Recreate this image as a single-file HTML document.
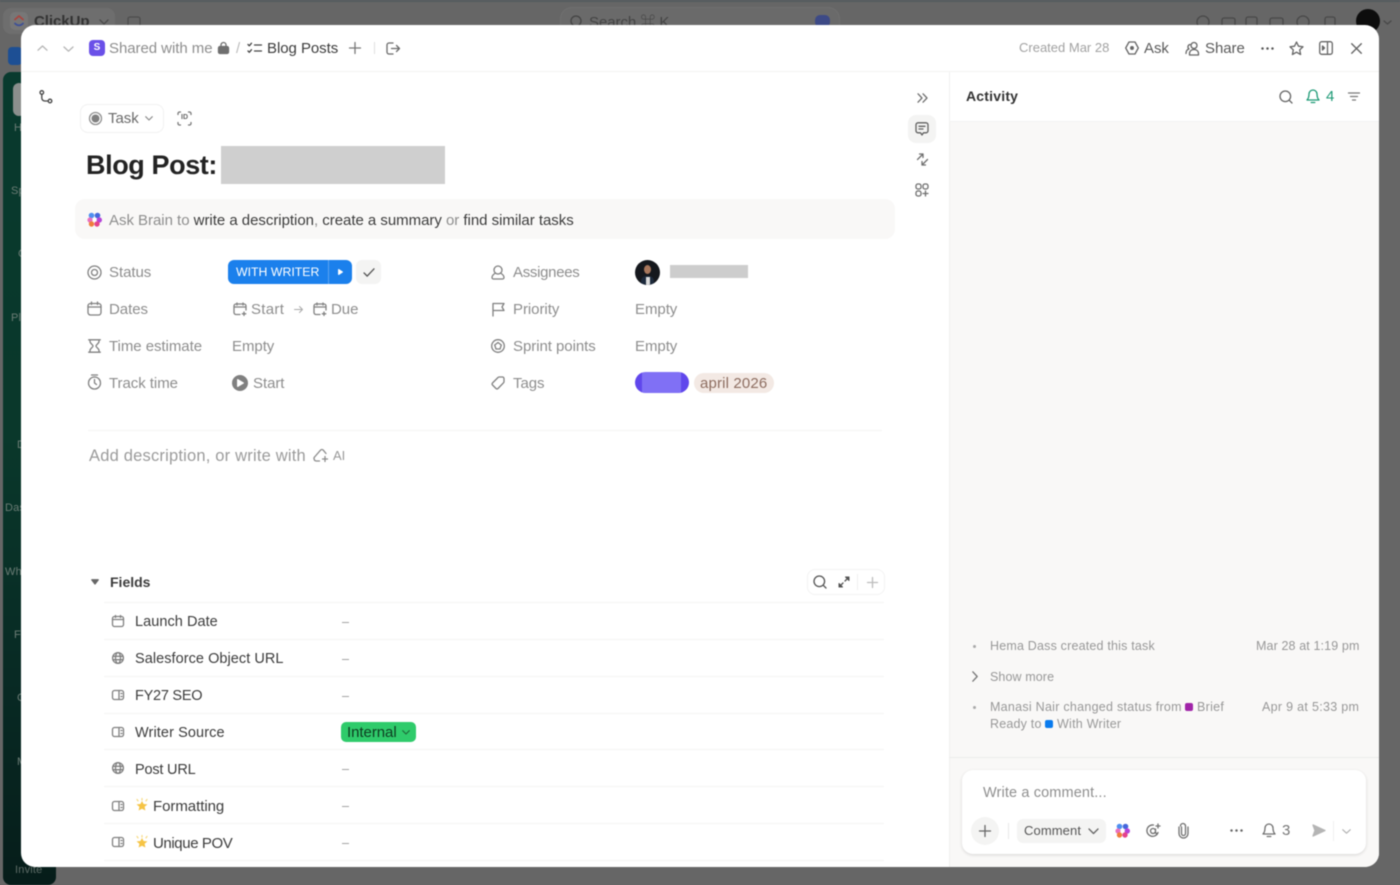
<!DOCTYPE html>
<html lang="en"><head><meta charset="utf-8"><title>Blog Post</title>
<style>
html,body{margin:0;padding:0;width:1400px;height:885px;overflow:hidden;background:#666}
*{box-sizing:border-box}
#root{position:relative;width:1400px;height:885px;overflow:hidden;background:#666;font-family:"Liberation Sans","Noto Sans CJK JP",sans-serif;filter:blur(.45px)}
.t{position:absolute;white-space:nowrap;font-size:15px;line-height:18px;letter-spacing:-.05px;color:#8e8e8e;margin-top:1px}
.n{margin-top:0}
.d{color:#3c3c3c}
.f{font-size:14.5px;letter-spacing:.05px}
.a{font-size:12.5px;letter-spacing:.19px;color:#989898;margin-top:0}
.s{font-size:11px;letter-spacing:.2px;color:#6b7c75;margin-top:0}
.b{position:absolute;background:#fff}
svg{position:absolute;overflow:visible;fill:none;stroke:#808080;stroke-width:1.3;stroke-linecap:round;stroke-linejoin:round}
.k{stroke:#454545}
.line{position:absolute;height:1px;background:#f4f4f3}
.dash{position:absolute;left:342px;width:7px;height:1px;background:#a4a4a4}
</style></head><body><div id="root">

<!-- dimmed background -->
<div class="b" style="left:0;top:0;width:1400px;height:2px;background:#555b5e"></div>
<div class="b" style="left:3px;top:8px;width:112px;height:26px;border-radius:8px;background:#6e6e6e"></div>
<div class="b" style="left:10px;top:12px;width:18px;height:18px;border-radius:5px;background:#777"></div>
<svg style="left:14px;top:15px" width="10" height="12" viewBox="0 0 10 12"><path d="M1 4.500L5 1l4 3.500" stroke="#a8453f" stroke-width="1.800"/><path d="M1 8.500C3.500 11 6.500 11 9 8.500" stroke="#3e4f96" stroke-width="1.800"/></svg>
<div class="t n" style="left:34px;top:13px;font-size:15px;font-weight:bold;color:#333">ClickUp</div>
<svg style="left:99px;top:19px" width="10" height="6" viewBox="0 0 10 6"><path d="M1 1l4 4 4-4" stroke="#4a4a4a"/></svg>
<svg style="left:127px;top:15px" width="14" height="14" viewBox="0 0 14 14"><rect x="1" y="2" width="12" height="11" rx="2" stroke="#4c4c4c"/></svg>
<div class="b" style="left:560px;top:7px;width:280px;height:30px;border-radius:12px;background:#6a6a6a;border:1px solid #707070"></div>
<div class="t n" style="left:589px;top:14px;font-size:15px;color:#444">Search ⌘ K</div>
<svg style="left:570px;top:15px" width="13" height="13" viewBox="0 0 13 13"><circle cx="6" cy="6" r="5" stroke="#444"/></svg>
<div class="b" style="left:815px;top:15px;width:15px;height:12px;border-radius:5px;background:#3d4a86"></div>
<svg style="left:1195px;top:15px" width="150" height="12" viewBox="0 0 150 12"><g stroke="#484848"><circle cx="8" cy="7" r="6"/><rect x="27" y="3" width="13" height="9" rx="2"/><rect x="51" y="2" width="11" height="10" rx="2"/><rect x="75" y="3" width="13" height="9" rx="2"/><circle cx="108" cy="7" r="6"/><rect x="130" y="2" width="10" height="10" rx="2"/></g></svg>
<div class="b" style="left:1356px;top:9px;width:24px;height:24px;border-radius:50%;background:#0d0d0d"></div>
<svg style="left:1383px;top:20px" width="9" height="5" viewBox="0 0 9 5"><path d="M1 1l3.500 3L8 1" stroke="#484848"/></svg>
<div class="b" style="left:8px;top:47px;width:14px;height:18px;border-radius:4px;background:#1d4f94"></div>
<div class="b" style="left:3px;top:72px;width:53px;height:813px;border-radius:8px;background:linear-gradient(#093a2e,#0a382b 45%,#082a24 75%,#061d1a)"></div>
<div class="b" style="left:13px;top:83px;width:12px;height:33px;border-radius:6px;background:#8b8f8d"></div>
<div class="t s" style="left:14px;top:119px">H</div>
<div class="t s" style="left:11px;top:182px">Sp</div>
<div class="t s" style="left:18px;top:245px">C</div>
<div class="t s" style="left:11px;top:309px">Pl</div>
<div class="t s" style="left:17px;top:436px">D</div>
<div class="t s" style="left:5px;top:499px">Das</div>
<div class="t s" style="left:5px;top:563px">Wh</div>
<div class="t s" style="left:14px;top:626px">F</div>
<div class="t s" style="left:17px;top:689px">C</div>
<div class="t s" style="left:17px;top:753px">M</div>
<div class="t s" style="left:15px;top:861px;color:#5d6b66">Invite</div>

<!-- modal -->
<div class="b" style="left:21px;top:25px;width:1358px;height:842px;border-radius:14px;overflow:hidden">
  <div style="position:absolute;left:928px;top:96px;width:430px;height:746px;background:#f9f8f7"></div>
  <div style="position:absolute;left:928px;top:46px;width:1px;height:796px;background:#f0f0ef"></div>
  <div style="position:absolute;left:0;top:46px;width:1358px;height:1px;background:#f3f3f2"></div>
  <div style="position:absolute;left:928px;top:96px;width:430px;height:1px;background:#f3f3f2"></div>
  <div style="position:absolute;left:928px;top:732px;width:430px;height:1px;background:#ececeb"></div>
</div>

<!-- header left -->
<svg style="left:37px;top:45px" width="11" height="6" viewBox="0 0 11 6"><path d="M1 5.200L5.500 1 10 5.200" stroke="#b4b4b4"/></svg>
<svg style="left:63px;top:46px" width="11" height="6" viewBox="0 0 11 6"><path d="M1 1l4.500 4.200L10 1" stroke="#b4b4b4"/></svg>
<div class="b" style="left:89px;top:40px;width:16px;height:16px;border-radius:4px;background:#6a50e8;color:#fff;font-size:10px;font-weight:bold;line-height:16px;text-align:center">S</div>
<div class="t" style="left:109px;top:39px">Shared with me</div>
<svg style="left:218px;top:42px" width="11" height="12" viewBox="0 0 11 12"><rect x=".5" y="4.500" width="10" height="7" rx="1.500" fill="#6f6f6f" stroke="#6f6f6f"/><path d="M3 4.500V3a2.500 2.500 0 015 0v1.500" stroke="#6f6f6f"/></svg>
<div class="t" style="left:236px;top:39px;color:#bbb">/</div>
<svg style="left:247px;top:42px" width="15" height="12" viewBox="0 0 15 12"><path d="M1 2.500l1.300 1.300L4.500 1.200M1 9l1.300 1.300 2.200-2.600M7.500 3h7M7.500 9h7" class="k"/></svg>
<div class="t d" style="left:267px;top:39px;font-weight:500">Blog Posts</div>
<svg style="left:349px;top:42px" width="12" height="12" viewBox="0 0 12 12"><path d="M6 .5v11M.5 6h11" stroke="#777"/></svg>
<div class="line" style="left:374px;top:42px;width:1px;height:12px;background:#e0e0e0"></div>
<svg style="left:386px;top:42px" width="14" height="13" viewBox="0 0 14 13"><path d="M7 1H3a2 2 0 00-2 2v7a2 2 0 002 2h4M5.500 6.500h8M10.500 3.500l3 3-3 3" stroke="#6a6a6a"/></svg>

<!-- header right -->
<div class="t" style="left:1019px;top:38px;font-size:13px;letter-spacing:0;color:#a2a2a2">Created Mar 28</div>
<svg style="left:1125px;top:41px" width="14" height="14" viewBox="0 0 14 14"><path d="M4 1h6l3.300 6L10 13H4L.7 7z" stroke="#666"/><circle cx="7" cy="7" r="1.300" fill="#666" stroke="#666"/></svg>
<div class="t" style="left:1144px;top:39px;color:#5a5a5a">Ask</div>
<svg style="left:1185px;top:41px" width="15" height="15" viewBox="0 0 15 15"><circle cx="9" cy="4.500" r="3" stroke="#666"/><path d="M4.500 14v-1.500c0-2.500 2-4 4.500-4s4.500 1.500 4.500 4V14zM5 3.500a2.500 2.500 0 00-1 4.500C2 8.500 1 10 1 12.500" stroke="#666"/></svg>
<div class="t" style="left:1205px;top:39px;color:#5a5a5a">Share</div>
<svg style="left:1261px;top:47px" width="13" height="3" viewBox="0 0 13 3"><circle cx="1.500" cy="1.500" r=".6" fill="#555" stroke="#555"/><circle cx="6.500" cy="1.500" r=".6" fill="#555" stroke="#555"/><circle cx="11.500" cy="1.500" r=".6" fill="#555" stroke="#555"/></svg>
<svg style="left:1289px;top:41px" width="15" height="14" viewBox="0 0 15 14"><path d="M7.500 1l2 4.200 4.500.6-3.300 3.100.9 4.600-4.100-2.300-4.100 2.300.9-4.600L1 5.800l4.500-.6z" stroke="#666"/></svg>
<svg style="left:1319px;top:41px" width="14" height="14" viewBox="0 0 14 14"><rect x=".7" y=".7" width="12.600" height="12.600" rx="2" stroke="#666"/><path d="M8.500 1v12" stroke="#666"/><path d="M3.500 5l2 2-2 2z" fill="#666" stroke="#666"/></svg>
<svg style="left:1351px;top:43px" width="11" height="11" viewBox="0 0 11 11"><path d="M.7.700l9.600 9.600M10.300.700L.7 10.300" stroke="#666" stroke-width="1.400"/></svg>

<!-- left rail -->
<svg style="left:39px;top:90px" width="14" height="14" viewBox="0 0 14 14"><circle cx="2.800" cy="2.500" r="1.800" class="k"/><circle cx="11" cy="11" r="1.800" class="k"/><path d="M2.800 4.500V8a3 3 0 003 3h3.300" class="k"/></svg>

<!-- task chip -->
<div class="b" style="left:80px;top:104px;width:84px;height:29px;border:1px solid #f1f1f1;border-radius:8px"></div>
<svg style="left:88px;top:111px" width="15" height="15" viewBox="0 0 15 15"><circle cx="7.500" cy="7.500" r="6" stroke="#909090"/><circle cx="7.500" cy="7.500" r="4" fill="#808080" stroke="none"/></svg>
<div class="t" style="left:108px;top:109px;color:#6a6a6a">Task</div>
<svg style="left:145px;top:116px" width="8" height="5" viewBox="0 0 8 5"><path d="M.7.700L4 4 7.300.7" stroke="#888" stroke-width="1.100"/></svg>
<svg style="left:177px;top:111px" width="15" height="15" viewBox="0 0 15 15"><path d="M1 3.500V2.500A1.500 1.500 0 012.500 1H3.500M11.500 1h1A1.500 1.500 0 0114 2.500V3.500M14 11.500v1a1.500 1.500 0 01-1.500 1.500H11.500M3.500 14H2.500A1.500 1.500 0 011 12.500V11.500" stroke="#777"/></svg>
<div class="t n" style="left:181px;top:112px;font-size:7px;line-height:12px;letter-spacing:0;font-weight:bold;color:#666">ID</div>

<!-- title -->
<div class="t n" style="left:86px;top:147px;font-size:27px;line-height:36px;font-weight:bold;color:#232323;letter-spacing:-.4px">Blog Post:</div>
<div class="b" style="left:221px;top:146px;width:224px;height:38px;background:#cfcfcf"></div>

<!-- Ask Brain -->
<div class="b" style="left:75px;top:199px;width:820px;height:40px;border-radius:10px;background:#f9f8f7"></div>
<svg style="left:87px;top:212px;stroke:none" width="15" height="15" viewBox="0 0 15 15"><circle cx="4.500" cy="3.500" r="2.800" fill="#4f8ff0"/><circle cx="10.500" cy="3.500" r="2.800" fill="#4467dc"/><circle cx="12.300" cy="8" r="2.700" fill="#b443d9"/><circle cx="3" cy="8" r="2.600" fill="#e870c0"/><circle cx="4.500" cy="12" r="2.700" fill="#ef7d3c"/><circle cx="10" cy="12" r="2.700" fill="#e5418b"/><circle cx="7.500" cy="7.500" r="1.800" fill="#fff"/></svg>
<div class="t" style="left:109px;top:211px;letter-spacing:-.03px">Ask Brain to <span class="d">write a description</span>, <span class="d">create a summary</span> or <span class="d">find similar tasks</span></div>

<!-- properties left -->
<svg style="left:87px;top:265px" width="15" height="15" viewBox="0 0 15 15"><circle cx="7.500" cy="7.500" r="6.500"/><circle cx="7.500" cy="7.500" r="3"/></svg>
<div class="t" style="left:109px;top:263px">Status</div>
<div class="b" style="left:228px;top:260px;width:124px;height:24px;border-radius:6px;background:#1b80ec"></div>
<div class="t n" style="left:236px;top:263px;font-size:12.300px;color:#fff;letter-spacing:0">WITH WRITER</div>
<div class="line" style="left:328px;top:260px;width:1px;height:24px;background:#5aa3f2"></div>
<svg style="left:338px;top:269px;stroke:#fff;fill:#fff" width="5" height="6" viewBox="0 0 5 6"><path d="M.7.700L4.300 3 .7 5.300z"/></svg>
<div class="b" style="left:356px;top:260px;width:25px;height:24px;border-radius:6px;background:#f4f4f3"></div>
<svg style="left:363px;top:268px" width="12" height="9" viewBox="0 0 13 10"><path d="M1 5.500L4.500 9 12 1" stroke="#555" stroke-width="1.500"/></svg>

<svg style="left:87px;top:301px" width="15" height="15" viewBox="0 0 15 15"><rect x="1" y="2.500" width="13" height="11.500" rx="2.500"/><path d="M1 6h13M4.500 1v2.500M10.500 1v2.500"/></svg>
<div class="t" style="left:109px;top:300px">Dates</div>
<svg style="left:233px;top:302px" width="14" height="14" viewBox="0 0 14 14"><path d="M7 12.500H3a2 2 0 01-2-2V4a2 2 0 012-2h8a2 2 0 012 2v4M1 5h12M4 1v2M10 1v2M11 10v3.500M9.300 11.800h3.500"/></svg>
<div class="t" style="left:251px;top:300px;letter-spacing:.3px">Start</div>
<svg style="left:294px;top:305px" width="9" height="9" viewBox="0 0 9 9"><path d="M.5 4.500h8M5.500 1.500l3 3-3 3" stroke="#aaa" stroke-width="1"/></svg>
<svg style="left:313px;top:302px" width="14" height="14" viewBox="0 0 14 14"><path d="M7 12.500H3a2 2 0 01-2-2V4a2 2 0 012-2h8a2 2 0 012 2v4M1 5h12M4 1v2M10 1v2M11 10v3.500M9.300 11.800h3.500"/></svg>
<div class="t" style="left:331px;top:300px">Due</div>

<svg style="left:88px;top:339px" width="13" height="14" viewBox="0 0 13 14"><path d="M.7.800h11.600M.7 13.200h11.600M2 1v1.500c0 2 3 3 3 4.500s-3 2.500-3 4.500V13M11 1v1.500c0 2-3 3-3 4.500s3 2.500 3 4.500V13"/></svg>
<div class="t" style="left:109px;top:337px">Time estimate</div>
<div class="t" style="left:232px;top:337px">Empty</div>

<svg style="left:87px;top:374px" width="15" height="16" viewBox="0 0 15 16"><circle cx="7.500" cy="9" r="6"/><path d="M7.500 5.500V9l2 1.500M4.500 1h6"/></svg>
<div class="t" style="left:109px;top:374px">Track time</div>
<div class="b" style="left:232px;top:375px;width:16px;height:16px;border-radius:50%;background:#808080"></div>
<svg style="left:237px;top:379px;stroke:#fff;fill:#fff" width="7" height="8" viewBox="0 0 7 8"><path d="M.7.700L6.300 4 .7 7.300z"/></svg>
<div class="t" style="left:253px;top:374px">Start</div>

<!-- properties right -->
<svg style="left:491px;top:265px" width="14" height="15" viewBox="0 0 14 15"><circle cx="7" cy="5" r="4"/><path d="M4.500 8C2 9.500 1 11 1 12.500A1.500 1.500 0 002.500 14h9a1.500 1.500 0 001.500-1.500c0-1.500-1-3-3.500-4.500"/></svg>
<div class="t" style="left:513px;top:263px;letter-spacing:-.3px">Assignees</div>
<div class="b" style="left:635px;top:260px;width:25px;height:25px;border-radius:50%;background:#15181d;overflow:hidden"><div style="position:absolute;left:9px;top:5px;width:7px;height:9px;border-radius:50%;background:#a8775c"></div><div style="position:absolute;left:6px;top:16px;width:13px;height:10px;border-radius:5px 5px 0 0;background:#1d2a3c"></div><div style="position:absolute;left:11px;top:17px;width:4px;height:8px;background:#ddd"></div></div>
<div class="b" style="left:670px;top:265px;width:78px;height:13px;background:#cdcdcd"></div>

<svg style="left:492px;top:302px" width="13" height="15" viewBox="0 0 13 15"><path d="M1 14V1.500h11L10 5l2 3.500H1"/></svg>
<div class="t" style="left:513px;top:300px">Priority</div>
<div class="t" style="left:635px;top:300px">Empty</div>

<svg style="left:491px;top:339px" width="14" height="14" viewBox="0 0 14 14"><circle cx="7" cy="7" r="6.300"/><path d="M7 3.500L10.300 6 9 10H5L3.700 6z"/></svg>
<div class="t" style="left:513px;top:337px">Sprint points</div>
<div class="t" style="left:635px;top:337px">Empty</div>

<svg style="left:491px;top:376px" width="14" height="14" viewBox="0 0 14 14"><path d="M13 2.500v3.300a1.500 1.500 0 01-.5 1L7 12.500a1.500 1.500 0 01-2 0L1.500 9a1.500 1.500 0 010-2L7 1.500a1.500 1.500 0 011-.5h3.500A1.500 1.500 0 0113 2.500z"/></svg>
<div class="t" style="left:513px;top:374px">Tags</div>
<div class="b" style="left:635px;top:372px;width:54px;height:21px;border-radius:10.500px;background:linear-gradient(90deg,#6047ec 0 7px,#8070f5 7px 46px,#6047ec 46px)"></div>
<div class="b" style="left:694px;top:373px;width:80px;height:20px;border-radius:10px;background:#f3e9e4"></div>
<div class="t" style="left:700px;top:374px;color:#8d6d60;letter-spacing:.15px">april 2026</div>

<div class="line" style="left:88px;top:430px;width:794px"></div>
<div class="t" style="left:89px;top:445px;font-size:16.500px;line-height:20px;color:#9b9b9b;letter-spacing:.2px">Add description, or write with</div>
<svg style="left:313px;top:448px" width="15" height="15" viewBox="0 0 15 15"><path d="M6.500 13H3.500A2.500 2.500 0 012 8.500L7.500 2.200a1.800 1.800 0 012.800 0L13 5.500M12 8.500v5M9.500 11h5" stroke="#8c8c8c"/></svg>
<div class="t n" style="left:333px;top:447px;font-size:13px;color:#999">AI</div>

<!-- Fields -->
<svg style="left:91px;top:579px;stroke:#666;fill:#666" width="8" height="6" viewBox="0 0 8 6"><path d="M.8.800h6.400L4 5z"/></svg>
<div class="t d n" style="left:110px;top:573px;font-weight:bold;font-size:14px;letter-spacing:0">Fields</div>
<div class="b" style="left:807px;top:569px;width:78px;height:26px;border:1px solid #f3f3f3;border-radius:8px"></div>
<svg style="left:813px;top:575px" width="14" height="14" viewBox="0 0 14 14"><circle cx="6.300" cy="6.300" r="5.300" stroke="#555"/><path d="M10.300 10.300L13 13" stroke="#555"/></svg>
<svg style="left:838px;top:576px" width="12" height="12" viewBox="0 0 12 12"><path d="M7.500 1h3.500v3.500L7.500 1zM4.500 11H1V7.500L4.500 11z" fill="#555" stroke="#555" stroke-width="1"/><path d="M9 3L7 5M3 9l2-2" stroke="#555"/></svg>
<div class="line" style="left:857px;top:574px;width:1px;height:16px;background:#f0f0f0"></div>
<svg style="left:867px;top:577px" width="11" height="11" viewBox="0 0 11 11"><path d="M5.500.5v10M.5 5.500h10" stroke="#bcbcbc"/></svg>

<div class="line" style="left:104px;top:602px;width:780px"></div>
<div class="line" style="left:104px;top:639px;width:780px"></div>
<div class="line" style="left:104px;top:676px;width:780px"></div>
<div class="line" style="left:104px;top:713px;width:780px"></div>
<div class="line" style="left:104px;top:749px;width:780px"></div>
<div class="line" style="left:104px;top:786px;width:780px"></div>
<div class="line" style="left:104px;top:823px;width:780px"></div>
<div class="line" style="left:104px;top:860px;width:780px"></div>

<svg style="left:112px;top:615px" width="12" height="12" viewBox="0 0 12 12"><rect x=".5" y="1.500" width="11" height="10" rx="2"/><path d="M.5 4.500h11M3.500 .5v2M8.500 .5v2"/></svg>
<div class="t d f" style="left:135px;top:612px">Launch Date</div>
<div class="dash" style="top:622px"></div>
<svg style="left:112px;top:652px" width="12" height="12" viewBox="0 0 12 12"><circle cx="6" cy="6" r="5.400"/><ellipse cx="6" cy="6" rx="2.500" ry="5.400"/><path d="M1 4.300h10M1 7.700h10"/></svg>
<div class="t d f" style="left:135px;top:649px">Salesforce Object URL</div>
<div class="dash" style="top:659px"></div>
<svg style="left:112px;top:690px" width="12" height="10" viewBox="0 0 12 10"><rect x=".5" y=".5" width="11" height="9" rx="2"/><path d="M7 .5v9M9 3.500h1M9 6.500h1"/></svg>
<div class="t d f" style="left:135px;top:686px;letter-spacing:-.25px">FY27 SEO</div>
<div class="dash" style="top:696px"></div>
<svg style="left:112px;top:727px" width="12" height="10" viewBox="0 0 12 10"><rect x=".5" y=".5" width="11" height="9" rx="2"/><path d="M7 .5v9M9 3.500h1M9 6.500h1"/></svg>
<div class="t d f" style="left:135px;top:723px;letter-spacing:.1px">Writer Source</div>
<div class="b" style="left:341px;top:722px;width:75px;height:20px;border-radius:5px;background:#2fcb6b"></div>
<div class="t" style="left:347px;top:723px;color:#0d3b20">Internal</div>
<svg style="left:402px;top:730px" width="8" height="5" viewBox="0 0 8 5"><path d="M.7.700L4 4 7.300.7" stroke="#1f6a3b" stroke-width="1.100"/></svg>
<svg style="left:112px;top:762px" width="12" height="12" viewBox="0 0 12 12"><circle cx="6" cy="6" r="5.400"/><ellipse cx="6" cy="6" rx="2.500" ry="5.400"/><path d="M1 4.300h10M1 7.700h10"/></svg>
<div class="t d f" style="left:135px;top:760px;letter-spacing:-.2px">Post URL</div>
<div class="dash" style="top:769px"></div>
<svg style="left:112px;top:801px" width="12" height="10" viewBox="0 0 12 10"><rect x=".5" y=".5" width="11" height="9" rx="2"/><path d="M7 .5v9M9 3.500h1M9 6.500h1"/></svg>
<svg style="left:135px;top:798px;stroke:none;fill:#f6c445" width="14" height="14" viewBox="0 0 14 14"><path d="M7 3l1.600 3 3.900.4-2.900 2.300.8 3.800L7 10.700l-3.400 1.800.8-3.800L1.500 6.400 5.400 6z"/><path d="M7 .5v1.500M2 1.500l1 1.300M12 1.500l-1 1.300" stroke="#f7dc8a" stroke-width="1.300" fill="none"/></svg>
<div class="t d" style="left:153px;top:797px">Formatting</div>
<div class="dash" style="top:806px"></div>
<svg style="left:112px;top:837px" width="12" height="10" viewBox="0 0 12 10"><rect x=".5" y=".5" width="11" height="9" rx="2"/><path d="M7 .5v9M9 3.500h1M9 6.500h1"/></svg>
<svg style="left:135px;top:835px;stroke:none;fill:#f6c445" width="14" height="14" viewBox="0 0 14 14"><path d="M7 3l1.600 3 3.900.4-2.900 2.300.8 3.800L7 10.700l-3.400 1.800.8-3.800L1.500 6.400 5.400 6z"/><path d="M7 .5v1.500M2 1.500l1 1.300M12 1.500l-1 1.300" stroke="#f7dc8a" stroke-width="1.300" fill="none"/></svg>
<div class="t d" style="left:153px;top:834px;letter-spacing:-.4px">Unique POV</div>
<div class="dash" style="top:843px"></div>

<!-- side icons -->
<svg style="left:917px;top:93px" width="11" height="10" viewBox="0 0 11 10"><path d="M1 .8L5 5 1 9.200M6 .8L10 5 6 9.200" stroke="#707070"/></svg>
<div class="b" style="left:908px;top:115px;width:28px;height:28px;border-radius:8px;background:#f4f4f3"></div>
<svg style="left:915px;top:122px" width="14" height="14" viewBox="0 0 14 14"><path d="M3 .8h8a2 2 0 012 2v6a2 2 0 01-2 2H8.500L7 13l-1.500-2.200H3a2 2 0 01-2-2v-6a2 2 0 012-2zM4 4.300h6M4 7h4" stroke="#606060"/></svg>
<svg style="left:916px;top:153px" width="13" height="13" viewBox="0 0 13 13"><path d="M1.500 6.500L7 1M3.500 1H7v3.500M11.500 6.500L6 12M9.500 12H6V8.500" stroke="#707070"/></svg>
<svg style="left:915px;top:183px" width="14" height="14" viewBox="0 0 14 14"><rect x="1" y="1" width="5" height="5" rx="1.800" stroke="#707070"/><rect x="8" y="1" width="5" height="5" rx="1.800" stroke="#707070"/><rect x="1" y="8" width="5" height="5" rx="1.800" stroke="#707070"/><path d="M10.500 8v5M8 10.500h5" stroke="#707070"/></svg>

<!-- activity -->
<div class="t n" style="left:966px;top:87px;font-weight:bold;font-size:14px;letter-spacing:.2px;color:#333">Activity</div>
<svg style="left:1279px;top:90px" width="14" height="14" viewBox="0 0 14 14"><circle cx="6.300" cy="6.300" r="5.300" stroke="#666"/><path d="M10.300 10.300L13 13" stroke="#666"/></svg>
<svg style="left:1306px;top:89px" width="14" height="15" viewBox="0 0 14 15"><path d="M7 1a4 4 0 014 4c0 3 .5 4.500 2 6H1c1.500-1.500 2-3 2-6a4 4 0 014-4zM5.200 13.500h3.600" stroke="#1d9a76"/></svg>
<div class="t" style="left:1326px;top:87px;color:#1d9a76">4</div>
<svg style="left:1348px;top:92px" width="12" height="9" viewBox="0 0 12 9"><path d="M.5 1h11M2.500 4.500h7M4.500 8h3" stroke="#777"/></svg>

<div class="b" style="left:973px;top:645px;width:3px;height:3px;border-radius:50%;background:#aaa"></div>
<div class="t a" style="left:990px;top:637px">Hema Dass created this task</div>
<div class="t a" style="left:1256px;top:637px;letter-spacing:.12px">Mar 28 at 1:19 pm</div>
<svg style="left:972px;top:671px" width="6" height="11" viewBox="0 0 6 11"><path d="M.8.800l4.400 4.700L.8 10.200" stroke="#777"/></svg>
<div class="t a" style="left:990px;top:668px;letter-spacing:.1px">Show more</div>
<div class="b" style="left:973px;top:706px;width:3px;height:3px;border-radius:50%;background:#aaa"></div>
<div class="t a" style="left:990px;top:698px;letter-spacing:.27px">Manasi Nair changed status from</div>
<div class="b" style="left:1185px;top:703px;width:8px;height:8px;border-radius:2px;background:#a024a8"></div>
<div class="t a" style="left:1197px;top:698px;letter-spacing:.3px">Brief</div>
<div class="t a" style="left:990px;top:715px;letter-spacing:.2px">Ready to</div>
<div class="b" style="left:1045px;top:720px;width:8px;height:8px;border-radius:2px;background:#0a7bee"></div>
<div class="t a" style="left:1057px;top:715px;letter-spacing:.25px">With Writer</div>
<div class="t a" style="left:1262px;top:698px;letter-spacing:.3px">Apr 9 at 5:33 pm</div>

<!-- comment box -->
<div class="b" style="left:962px;top:770px;width:404px;height:84px;border-radius:11px;box-shadow:0 1px 3px rgba(0,0,0,.14)"></div>
<div class="t" style="left:983px;top:783px;font-size:14.500px;color:#8f8f8f;letter-spacing:.13px">Write a comment...</div>
<div class="b" style="left:971px;top:817px;width:28px;height:28px;border-radius:50%;background:#f4f4f3"></div>
<svg style="left:979px;top:825px" width="12" height="12" viewBox="0 0 12 12"><path d="M6 .5v11M.5 6h11" stroke="#666"/></svg>
<div class="line" style="left:1008px;top:823px;width:1px;height:16px;background:#e8e8e8"></div>
<div class="b" style="left:1017px;top:819px;width:89px;height:24px;border-radius:6px;background:#f4f4f3"></div>
<div class="t n" style="left:1024px;top:822px;font-size:13px;letter-spacing:.1px;color:#565656">Comment</div>
<svg style="left:1088px;top:828px" width="11" height="7" viewBox="0 0 11 7"><path d="M1 1l4.500 4.500L10 1" stroke="#666"/></svg>
<svg style="left:1115px;top:823px;stroke:none" width="15" height="15" viewBox="0 0 15 15"><circle cx="4.500" cy="3.500" r="2.800" fill="#4f8ff0"/><circle cx="10.500" cy="3.500" r="2.800" fill="#4467dc"/><circle cx="12.300" cy="8" r="2.700" fill="#b443d9"/><circle cx="3" cy="8" r="2.600" fill="#e870c0"/><circle cx="4.500" cy="12" r="2.700" fill="#ef7d3c"/><circle cx="10" cy="12" r="2.700" fill="#e5418b"/><circle cx="7.500" cy="7.500" r="1.800" fill="#fff"/></svg>
<svg style="left:1146px;top:823px" width="15" height="15" viewBox="0 0 15 15"><path d="M12 9.500A5.700 5.700 0 117.500 2M7 5.500a2.500 2.500 0 100 5 2.500 2.500 0 000-5zM9.500 6v3c0 2 2.500 2 2.500 .5M12 1v4M10 3h4" stroke="#707070"/></svg>
<svg style="left:1178px;top:823px" width="11" height="15" viewBox="0 0 11 15"><path d="M3.500 4v6.500a2 2 0 004 0V3a2.500 2.500 0 00-5 0M1 4v6.500a4.500 4.500 0 009 0V4" stroke="#707070"/></svg>
<svg style="left:1230px;top:829px" width="13" height="3" viewBox="0 0 13 3"><circle cx="1.500" cy="1.500" r=".6" fill="#666" stroke="#666"/><circle cx="6.500" cy="1.500" r=".6" fill="#666" stroke="#666"/><circle cx="11.500" cy="1.500" r=".6" fill="#666" stroke="#666"/></svg>
<svg style="left:1262px;top:823px" width="14" height="15" viewBox="0 0 14 15"><path d="M7 1a4 4 0 014 4c0 3 .5 4.500 2 6H1c1.500-1.500 2-3 2-6a4 4 0 014-4zM5.200 13.500h3.600" stroke="#707070"/></svg>
<div class="t" style="left:1282px;top:821px;color:#777">3</div>
<svg style="left:1312px;top:824px;stroke:#b5b5b5;fill:#b5b5b5" width="14" height="13" viewBox="0 0 14 13"><path d="M1 1l12 5.500L1 12l2-5.500z"/></svg>
<div class="line" style="left:1333px;top:821px;width:1px;height:20px;background:#f0f0f0"></div>
<svg style="left:1342px;top:829px" width="9" height="5" viewBox="0 0 9 5"><path d="M.7.700l3.800 3.500L8.300.7" stroke="#b0b0b0" stroke-width="1.100"/></svg>

</div></body></html>
